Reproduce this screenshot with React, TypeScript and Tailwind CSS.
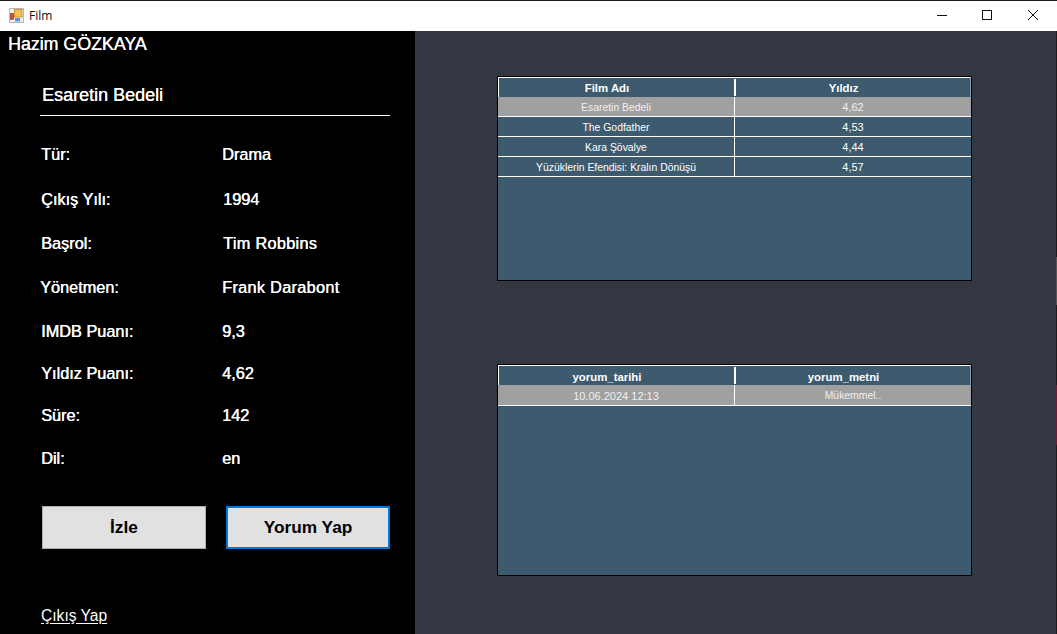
import React from "react";

const details = [
  { label: "Tür:", value: "Drama", rowCls: "h-[45px] pl-[41px]", valCls: "ml-[181px]" },
  { label: "Çıkış Yılı:", value: "1994", rowCls: "h-[44px] pl-[41px]", valCls: "ml-[182px]" },
  { label: "Başrol:", value: "Tim Robbins", rowCls: "h-[44px] pl-[41px]", valCls: "ml-[182px] tracking-[0.3px]" },
  { label: "Yönetmen:", value: "Frank Darabont", rowCls: "h-[44px] pl-[40px]", valCls: "ml-[182px] tracking-[0.3px]" },
  { label: "IMDB Puanı:", value: "9,3", rowCls: "h-[42px] pl-[41px]", valCls: "ml-[181px]" },
  { label: "Yıldız Puanı:", value: "4,62", rowCls: "h-[42px] pl-[41px]", valCls: "ml-[181px]" },
  { label: "Süre:", value: "142", rowCls: "h-[43px] pl-[41px]", valCls: "ml-[181px]" },
  { label: "Dil:", value: "en", rowCls: "h-[43px] pl-[41px]", valCls: "ml-[181px]" },
];

type TableProps = {
  head: [string, string];
  rows: [string, string][];
  heightCls: string;
  headLeading: string;
  rowCls: string;
};

function Cell({ text, cls }: { text: string; cls: string }) {
  const numeric = /^[\d.,: ]+$/.test(text);
  return <div className={`${cls} ${numeric ? "text-[11px]" : "text-[10.4px]"}`}>{text}</div>;
}

function DataTable({ head, rows, heightCls, headLeading, rowCls }: TableProps) {
  return (
    <div className={`w-[475px] border border-black bg-[#3d5a6f] text-white ${heightCls}`}>
      <div className={`flex h-[20px] border-t border-l border-r border-t-white border-l-white border-r-[#8a9aa6] font-bold text-[11.4px] ${headLeading}`}>
        <div className="w-[237px] text-center border-r-2 border-white mt-px h-[17px] pr-[19px]">{head[0]}</div>
        <div className="flex-1 text-center pr-[19px] pt-px">{head[1]}</div>
      </div>
      {rows.map((r, i) => (
        <div
          key={r[0]}
          className={`flex border-b border-white ${rowCls} ${i === 0 ? "bg-[#a0a0a0] text-[#f0f0f0]" : ""}`}
        >
          <Cell text={r[0]} cls="w-[237px] text-center border-r border-white" />
          <Cell text={r[1]} cls="flex-1 text-center" />
        </div>
      ))}
    </div>
  );
}

export default function App() {
  return (
    <div className="w-[1057px] h-[634px] flex flex-col overflow-hidden bg-[#333741] border-t border-[#1c1c1c] font-['Liberation_Sans',Arial,sans-serif]">
      {/* title bar */}
      <div className="h-[30px] shrink-0 bg-white flex items-center">
        <svg width="16" height="16" viewBox="0 0 16 16" className="ml-[9px]">
          <rect x="0.5" y="0.5" width="14" height="14" fill="#f0f0f0" stroke="#b8b8b8" />
          <rect x="1.5" y="5.5" width="3" height="6" fill="#d9453a" stroke="#8c2a22" strokeWidth="0.6" />
          <rect x="5.5" y="1.5" width="7.5" height="7.5" fill="#f2c350" stroke="#c08a20" strokeWidth="0.8" />
          <rect x="6" y="10" width="5" height="3.5" fill="#5b93de" />
        </svg>
        <span className="ml-[4px] text-[12px] text-[#111] font-['Open_Sans',sans-serif]">Film</span>
        <div className="ml-auto flex items-center h-full">
          <svg width="46" height="30" viewBox="0 0 46 30">
            <path d="M18 14.5h10" stroke="#111" strokeWidth="1" fill="none" shapeRendering="crispEdges" />
          </svg>
          <svg width="46" height="30" viewBox="0 0 46 30">
            <rect x="17.5" y="9.5" width="9" height="9" stroke="#111" strokeWidth="1" fill="none" shapeRendering="crispEdges" />
          </svg>
          <svg width="46" height="30" viewBox="0 0 46 30">
            <path d="M17 9l10 10M27 9l-10 10" stroke="#111" strokeWidth="1" fill="none" />
          </svg>
        </div>
      </div>

      {/* body */}
      <div className="flex-1 flex min-h-0">
        {/* left panel */}
        <div className="w-[415px] shrink-0 bg-black text-white flex flex-col">
          <div className="h-[26px] pl-[8px] text-[17.8px] leading-[26px] whitespace-nowrap [text-shadow:0.3px_0_0_#fff]">Hazim GÖZKAYA</div>
          <div className="ml-[40px] mr-[25px] mt-[13px] h-[46px] border-b border-white pl-[2px] text-[18px] leading-[50px] [text-shadow:0.3px_0_0_#fff]">
            Esaretin Bedeli
          </div>
          <div className="mt-[27px] flex flex-col text-[16.3px] leading-[22px]">
            {details.map((d) => (
              <div key={d.label} className={`flex items-start ${d.rowCls}`}>
                <span className="w-0 whitespace-nowrap font-medium [text-shadow:0.4px_0_0_#fff]">{d.label}</span>
                <span className={`whitespace-nowrap font-medium [text-shadow:0.4px_0_0_#fff] ${d.valCls}`}>{d.value}</span>
              </div>
            ))}
          </div>
          <div className="ml-[42px] mt-[16px] flex gap-[20px] text-[17.3px] text-black font-bold">
            <button className="w-[164px] h-[43px] bg-[#e1e1e1] border border-[#adadad]">İzle</button>
            <button className="w-[164px] h-[43px] bg-[#e1e1e1] border-2 border-[#0078d7]">Yorum Yap</button>
          </div>
          <div className="ml-[41px] mt-[57px] text-[15.6px] leading-[20px] underline underline-offset-2">Çıkış Yap</div>
        </div>

        {/* right panel */}
        <div className="flex-1 flex flex-col pl-[82px] pt-[45px]">
          <DataTable
            head={["Film Adı", "Yıldız"]}
            heightCls="h-[205px]"
            headLeading="leading-[18px]"
            rowCls="h-[20px] leading-[21px]"
            rows={[
              ["Esaretin Bedeli", "4,62"],
              ["The Godfather", "4,53"],
              ["Kara Şövalye", "4,44"],
              ["Yüzüklerin Efendisi: Kralın Dönüşü", "4,57"],
            ]}
          />
          <div className="h-[83px]" />
          <DataTable
            head={["yorum_tarihi", "yorum_metni"]}
            heightCls="h-[212px]"
            headLeading="leading-[20px]"
            rowCls="h-[21px] leading-[22px]"
            rows={[["10.06.2024 12:13", "Mükemmel.."]]}
          />
        </div>

        {/* right edge */}
        <div className="w-px bg-[#1c1c1c] flex flex-col">
          <div className="h-[226px]" />
          <div className="h-[48px] bg-[#555]" />
          <div className="h-[80px]" />
          <div className="h-[60px] bg-[#6d1a35]" />
        </div>
      </div>
    </div>
  );
}
